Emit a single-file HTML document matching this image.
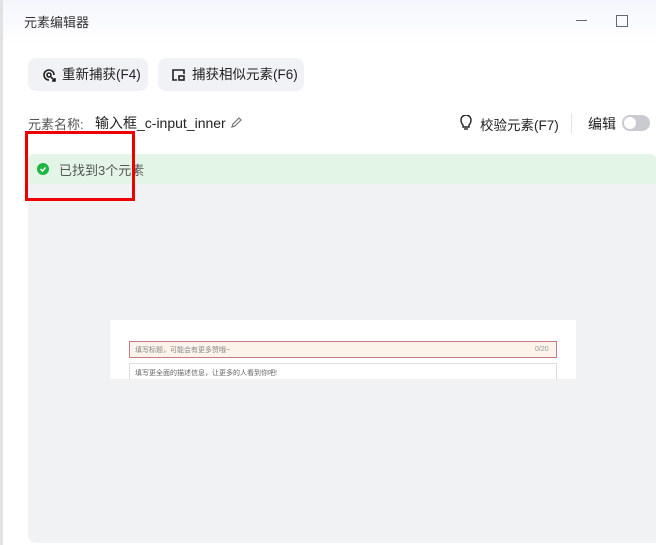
<html><head><style>
body{margin:0;width:656px;height:545px;overflow:hidden;background:#fff;font-family:"Liberation Sans","Noto Sans CJK SC",sans-serif;position:relative;color:#333}
.a{position:absolute}
.btn{position:absolute;top:58px;height:33px;background:#f1f2f5;border-radius:8px;font-size:13.5px;color:#222;line-height:33px;box-sizing:border-box;padding-left:34px}
</style></head><body>
<div class="a" style="left:0;top:0;width:656px;height:45px;background:linear-gradient(#f4f6fc,#fff)"></div>
<div class="a" style="left:0;top:0;width:3px;height:545px;background:#e2e2e2"></div>
<div class="a" style="left:24px;top:12px;font-size:13px;color:#333">元素编辑器</div>
<div class="a" style="left:576px;top:20px;width:11px;height:1px;background:#667"></div>
<div class="a" style="left:616px;top:15px;width:10px;height:10px;border:1px solid #667"></div>
<div class="btn" style="left:28px;width:120px"><svg class="a" style="left:13px;top:9px" width="16" height="16" viewBox="0 0 16 16" fill="none" stroke="#222" stroke-width="1.6"><path d="M13 8A5 5 0 1 0 8 13"/><circle cx="8" cy="8" r="2"/><path d="M10 10l4 4M11 14h3v-3"/></svg>重新捕获(F4)</div>
<div class="btn" style="left:158px;width:146px"><svg class="a" style="left:13px;top:10px" width="15" height="14" viewBox="0 0 15 14" fill="none" stroke="#222" stroke-width="1.6"><path d="M6 12H2V2h11v4"/><rect x="8" y="8" width="5" height="4"/></svg>捕获相似元素(F6)</div>
<div class="a" style="left:28px;top:114px;font-size:13px;color:#555">元素名称:</div>
<div class="a" style="left:95px;top:113px;font-size:14px;color:#222">输入框_c-input_inner</div>
<svg class="a" style="left:230px;top:116px" width="13" height="13" viewBox="0 0 13 13" fill="none" stroke="#777" stroke-width="1.2"><path d="M2 11l1-3 6-6 2 2-6 6z"/></svg>
<svg class="a" style="left:460px;top:115px" width="12" height="16" viewBox="0 0 12 16" fill="none" stroke="#222" stroke-width="1.4"><path d="M3 10C1 8 1 6 1 5a5 5 0 0 1 10 0c0 1 0 3-2 5v2H3z"/><path d="M4 14h4"/></svg>
<div class="a" style="left:480px;top:114px;font-size:13.5px;color:#222">校验元素(F7)</div>
<div class="a" style="left:571px;top:113px;width:1px;height:20px;background:#e3e3e3"></div>
<div class="a" style="left:588px;top:114px;font-size:14px;color:#222">编辑</div>
<div class="a" style="left:622px;top:115px;width:28px;height:16px;border-radius:8px;background:#c9cbd0"></div>
<div class="a" style="left:624px;top:117px;width:12px;height:12px;border-radius:6px;background:#fff"></div>
<div class="a" style="left:28px;top:154px;width:628px;height:30px;background:#e3f5e6;border-radius:6px 6px 0 0"></div>
<div class="a" style="left:37px;top:163px;width:12px;height:12px;border-radius:6px;background:#1fb541"></div>
<svg class="a" style="left:37px;top:163px" width="12" height="12"><path d="M3.5 6l2 2 3-3.5" fill="none" stroke="#fff" stroke-width="1.5"/></svg>
<div class="a" style="left:59px;top:160px;font-size:13px;color:#555">已找到3个元素</div>
<div class="a" style="left:28px;top:184px;width:628px;height:359px;background:#f1f2f4;border-radius:0 0 0 8px"></div>
<div class="a" style="left:110px;top:320px;width:466px;height:59px;background:#fff"></div>
<div class="a" style="left:129px;top:341px;width:426px;height:15px;background:#fcf3ea;border:1px solid #c87a86"></div>
<div class="a" style="left:135px;top:345px;font-size:7px;color:#888">填写标题，可能会有更多赞哦~</div>
<div class="a" style="left:535px;top:346px;font-size:7px;color:#999">0/20</div>
<div class="a" style="left:129px;top:363px;width:426px;height:16px;border:1px solid #ddd;border-bottom:none"></div>
<div class="a" style="left:135px;top:368px;font-size:7px;color:#666">填写更全面的描述信息，让更多的人看到你吧!</div>
<div class="a" style="left:25px;top:131px;width:104px;height:64px;border:3px solid #e00"></div>
</body></html>
